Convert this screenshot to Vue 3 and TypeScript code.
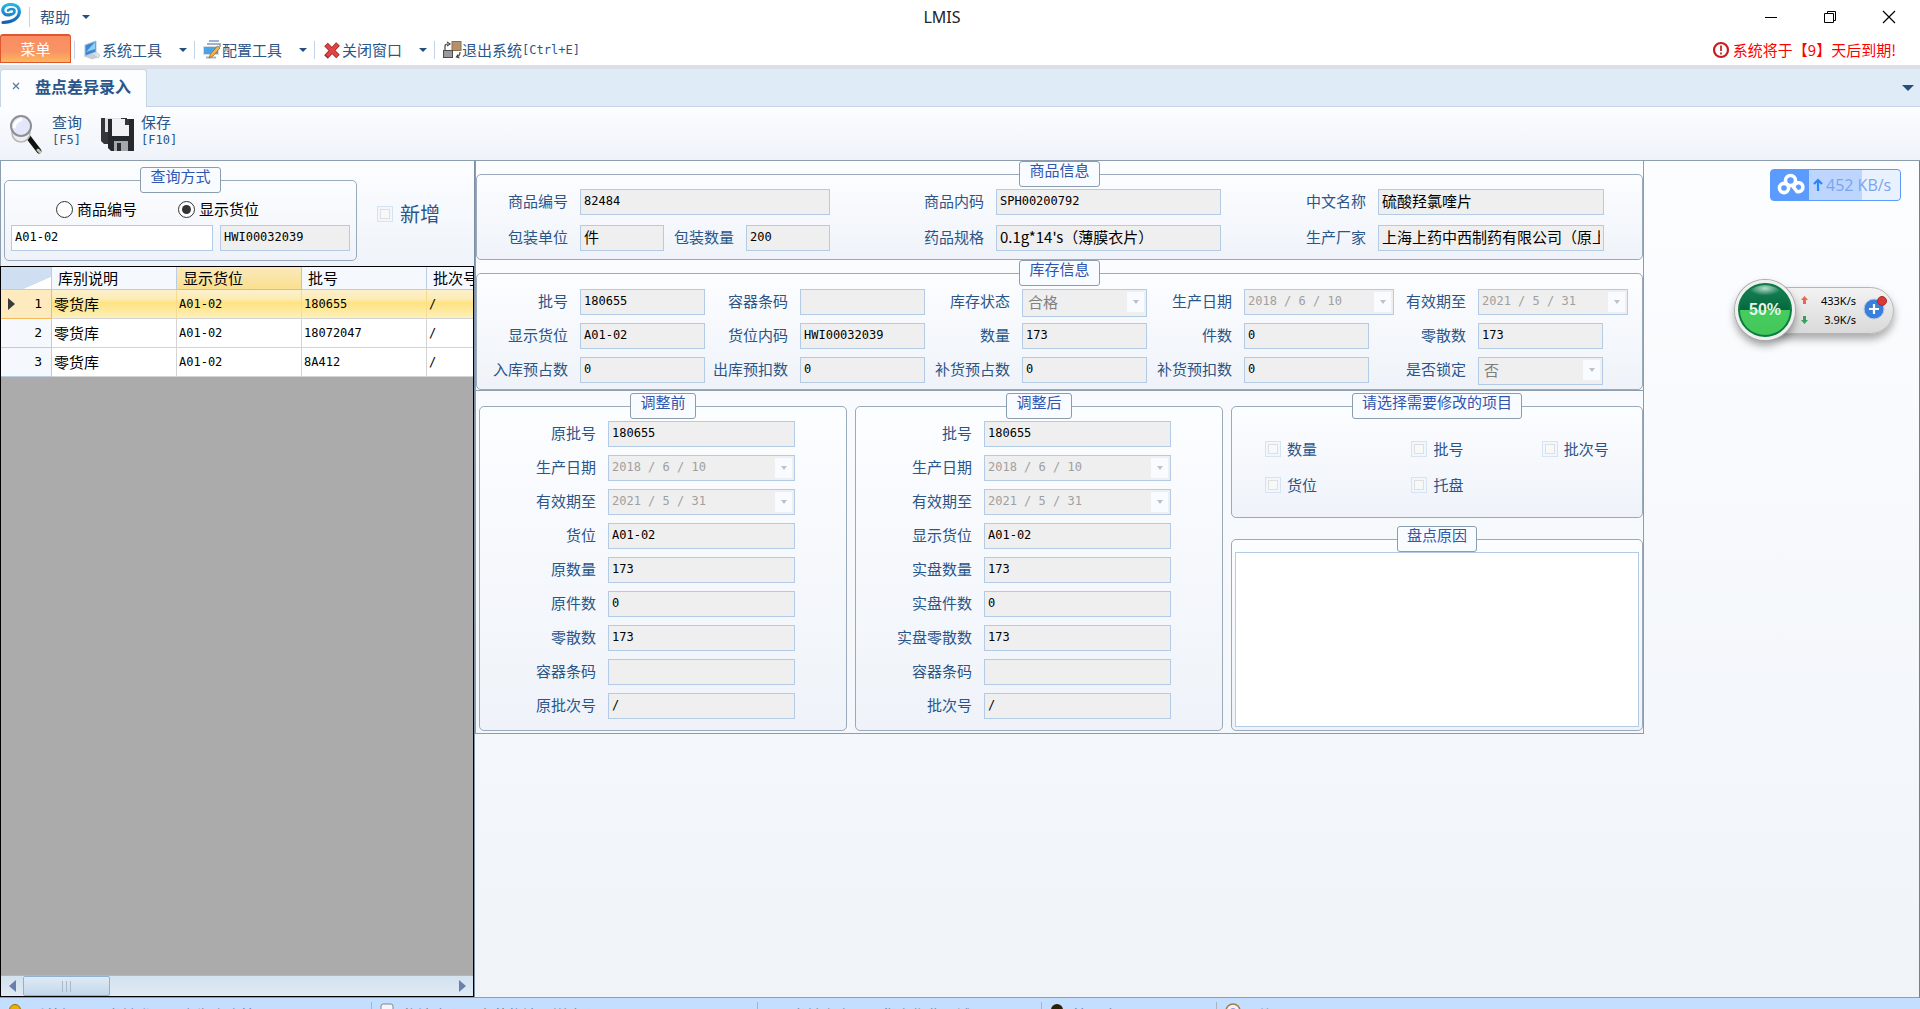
<script setup lang="ts">
import { ref } from 'vue'

interface Field {
  id: string
  label: string
  value: string
  kind?: 'text' | 'date' | 'select'
  cjk?: boolean
  wide?: boolean
}

const product: Field[] = [
  { id: 'p-code', label: '商品编号', value: '82484', wide: true },
  { id: 'p-inner', label: '商品内码', value: 'SPH00200792' },
  { id: 'p-name', label: '中文名称', value: '硫酸羟氯喹片', cjk: true },
  { id: 'p-unit', label: '包装单位', value: '件', cjk: true },
  { id: 'p-pack', label: '包装数量', value: '200' },
  { id: 'p-spec', label: '药品规格', value: "0.1g*14's（薄膜衣片）", cjk: true },
  { id: 'p-maker', label: '生产厂家', value: '上海上药中西制药有限公司（原上海中西药业）', cjk: true },
]

const stock: Field[] = [
  { id: 's-lot', label: '批号', value: '180655' },
  { id: 's-box', label: '容器条码', value: '' },
  { id: 's-state', label: '库存状态', value: '合格', kind: 'select' },
  { id: 's-made', label: '生产日期', value: '2018 / 6 / 10', kind: 'date', wide: true },
  { id: 's-exp', label: '有效期至', value: '2021 / 5 / 31', kind: 'date', wide: true },
  { id: 's-show', label: '显示货位', value: 'A01-02' },
  { id: 's-loc', label: '货位内码', value: 'HWI00032039' },
  { id: 's-qty', label: '数量', value: '173' },
  { id: 's-pcs', label: '件数', value: '0' },
  { id: 's-odd', label: '零散数', value: '173' },
  { id: 's-in', label: '入库预占数', value: '0' },
  { id: 's-out', label: '出库预扣数', value: '0' },
  { id: 's-rin', label: '补货预占数', value: '0' },
  { id: 's-rout', label: '补货预扣数', value: '0' },
  { id: 's-lock', label: '是否锁定', value: '否', kind: 'select' },
]

const adjust: { title: string; fields: Field[] }[] = [
  {
    title: '调整前',
    fields: [
      { id: 'b-lot', label: '原批号', value: '180655' },
      { id: 'b-made', label: '生产日期', value: '2018 / 6 / 10', kind: 'date' },
      { id: 'b-exp', label: '有效期至', value: '2021 / 5 / 31', kind: 'date' },
      { id: 'b-loc', label: '货位', value: 'A01-02' },
      { id: 'b-qty', label: '原数量', value: '173' },
      { id: 'b-pcs', label: '原件数', value: '0' },
      { id: 'b-odd', label: '零散数', value: '173' },
      { id: 'b-box', label: '容器条码', value: '' },
      { id: 'b-bat', label: '原批次号', value: '/' },
    ],
  },
  {
    title: '调整后',
    fields: [
      { id: 'a-lot', label: '批号', value: '180655' },
      { id: 'a-made', label: '生产日期', value: '2018 / 6 / 10', kind: 'date' },
      { id: 'a-exp', label: '有效期至', value: '2021 / 5 / 31', kind: 'date' },
      { id: 'a-loc', label: '显示货位', value: 'A01-02' },
      { id: 'a-qty', label: '实盘数量', value: '173' },
      { id: 'a-pcs', label: '实盘件数', value: '0' },
      { id: 'a-odd', label: '实盘零散数', value: '173' },
      { id: 'a-box', label: '容器条码', value: '' },
      { id: 'a-bat', label: '批次号', value: '/' },
    ],
  },
]

const items = ['数量', '批号', '批次号', '货位', '托盘']
const rows = [
  ['零货库', 'A01-02', '180655', '/'],
  ['零货库', 'A01-02', '18072047', '/'],
  ['零货库', 'A01-02', '8A412', '/'],
]
const selected = ref(0)
const mode = ref('loc')
const keyword = ref('A01-02')
const reason = ref('')
</script>

<template>
  <div class="app">
    <header class="titlebar">
      <svg class="logo" width="22" height="22" viewBox="0 0 22 22">
        <defs>
          <linearGradient id="lg" x1="0" y1="0" x2="0" y2="1">
            <stop offset="0" stop-color="#25b4e6" />
            <stop offset="1" stop-color="#1460b4" />
          </linearGradient>
        </defs>
        <path d="M10.500 11.500C6 13 2.500 10.500 2.800 7 3.200 3 7.500 1.300 11.500 1.500 17 1.800 19.800 5 19.300 9.500 18.600 15.500 12 19 3 19.500" fill="none" stroke="url(#lg)" stroke-width="3.200" stroke-linecap="round" />
        <path d="M8 7.500c2-2 6-2 6.500.3.400 2-1.800 3.700-4 3.700" fill="none" stroke="#1d8fd0" stroke-width="2.600" stroke-linecap="round" />
      </svg>
      <span class="sep tall"></span>
      <button class="menu help">帮助<i class="caret"></i></button>
      <h1>LMIS</h1>
      <div class="winctl">
        <button aria-label="最小化"><svg width="14" height="14"><path d="M1 7.500h12" stroke="#000" /></svg></button>
        <button aria-label="还原"><svg width="14" height="14" fill="none" stroke="#000"><path d="M1.500 3.500h9v9h-9zM4.500 3.500v-2h8v9h-2" /></svg></button>
        <button aria-label="关闭"><svg width="14" height="14"><path d="M1 1l12 12M13 1L1 13" stroke="#000" stroke-width="1.200" /></svg></button>
      </div>
    </header>

    <nav class="ribbon">
      <button class="main-menu">菜单</button>
      <span class="sep"></span>
      <button class="menu">
        <svg width="20" height="20" viewBox="0 0 20 20">
          <path d="M1 16l10-2 7 3-8 2.500z" fill="#c9ced6" />
          <path d="M3 5l11-4 0 11-11 4z" fill="#3f86d0" stroke="#a9c3de" />
          <path d="M4 12l9-10v7z" fill="#8fd0f5" />
          <path d="M14 12l4 3-2 3-4-3z" fill="#dfe3e8" stroke="#b9c0c9" stroke-width=".6" />
        </svg>系统工具<i class="caret far"></i>
      </button>
      <span class="sep"></span>
      <button class="menu">
        <svg width="20" height="20" viewBox="0 0 20 20">
          <path d="M7 1h10M5 4h13v3" fill="none" stroke="#7f9cbd" stroke-width="1.500" />
          <rect x="1.500" y="6.500" width="15" height="8" fill="#49a3e4" stroke="#d4dce6" />
          <path d="M4 17.500h10" stroke="#a8b2bf" stroke-width="2" />
          <path d="M7 18l1.500-4 7-8 2.500 2-7 8z" fill="#f3b548" stroke="#a3672a" stroke-width=".8" />
        </svg>配置工具<i class="caret far"></i>
      </button>
      <span class="sep"></span>
      <button class="menu">
        <svg width="20" height="20" viewBox="0 0 20 20"><path d="M4 4.500l12 12M16 4L4 17" stroke="#a52424" stroke-width="5" /><path d="M4.500 5l11 11M15.500 4.500L5 16" stroke="#e04444" stroke-width="3.400" /></svg>关闭窗口<i class="caret far"></i>
      </button>
      <span class="sep"></span>
      <button class="menu">
        <svg width="20" height="20" viewBox="0 0 20 20">
          <rect x="10" y="1.500" width="9" height="9" fill="#b5916b" stroke="#8d6e4d" />
          <rect x="1.500" y="10.500" width="9" height="7" fill="#9a9a9a" stroke="#4c4c4c" />
          <path d="M3 10V6q0-2 3-2M5 2l3 2-3 2M18 12q0 4-3 5m1-2.500L14.500 17l3 1" fill="none" stroke="#444" stroke-width="1.200" />
        </svg>退出系统<span class="mono">[Ctrl+E]</span>
      </button>
      <p class="notice">
        <svg width="18" height="18" viewBox="0 0 18 18"><circle cx="9" cy="9" r="7" fill="#fff" stroke="#c81e1e" stroke-width="2.200" /><path d="M9 4.500v5.500M9 11.500v2" stroke="#b01515" stroke-width="1.600" /></svg>
        系统将于【9】天后到期!
      </p>
    </nav>

    <div class="tabs">
      <div class="tab"><button class="tab-close" aria-label="关闭标签"><svg width="8" height="8"><path d="M1 1l6 6M7 1L1 7" stroke="#5b7ba0" stroke-width="1.300" /></svg></button>盘点差异录入</div>
      <button class="tab-list" aria-label="标签列表"><i class="caret big"></i></button>
    </div>

    <div class="toolbar">
      <button class="tool">
        <svg width="36" height="42" viewBox="0 0 36 42">
          <path d="M21 25l10 13" stroke="#111" stroke-width="5" stroke-linecap="round" />
          <path d="M30 37l2 2" stroke="#b9c9b4" stroke-width="3" stroke-linecap="round" />
          <circle cx="13" cy="20" r="9" fill="#eceef2" stroke="#b7b7ba" stroke-width="1.500" />
          <circle cx="13" cy="13" r="10" fill="#e4e6fb" stroke="#8f8f92" stroke-width="2" />
          <path d="M6 15q1-7 8-9" stroke="#fff" stroke-width="3" fill="none" />
        </svg>
        <span class="tool-text">查询<span class="mono">[F5]</span></span>
      </button>
      <button class="tool save">
        <svg width="36" height="36" viewBox="0 0 36 36">
          <path d="M1 2h26v26H4l-3-3z" fill="#33363b" />
          <rect x="5" y="2" width="16" height="14" fill="#dfe1e4" />
          <path d="M8 3h26v32H11l-3-3z" fill="#25282d" />
          <rect x="12" y="3" width="17" height="17" fill="#f1f2f4" />
          <rect x="25" y="3" width="4" height="6" fill="#33363b" />
          <rect x="14" y="25" width="14" height="10" fill="#a5a8ac" />
          <rect x="17" y="27" width="4" height="8" fill="#2a2d31" />
        </svg>
        <span class="tool-text">保存<span class="mono">[F10]</span></span>
      </button>
    </div>

    <main class="work">
      <aside class="left">
        <div class="query">
          <fieldset class="group query-box">
            <legend>查询方式</legend>
            <div class="radios">
              <label><input v-model="mode" type="radio" name="mode" value="code" />商品编号</label>
              <label><input v-model="mode" type="radio" name="mode" value="loc" />显示货位</label>
            </div>
            <div class="query-fields">
              <input v-model="keyword" class="box editable" aria-label="显示货位" />
              <input class="box" value="HWI00032039" readonly aria-label="货位内码" />
            </div>
          </fieldset>
          <label class="add"><input type="checkbox" disabled />新增</label>
        </div>
        <div class="grid-wrap">
          <table>
            <colgroup><col class="c0" /><col class="c1" /><col class="c1" /><col class="c1" /><col /></colgroup>
            <thead>
              <tr><th class="corner"></th><th>库别说明</th><th class="hot">显示货位</th><th>批号</th><th>批次号</th></tr>
            </thead>
            <tbody>
              <tr v-for="(r, i) in rows" :key="i" :class="{ on: i === selected }" @click="selected = i">
                <th scope="row"><div class="rowhead"><i :class="{ pointer: i === selected }"></i><span>{{ i + 1 }}</span></div></th>
                <td class="cn">{{ r[0] }}</td>
                <td>{{ r[1] }}</td>
                <td>{{ r[2] }}</td>
                <td>{{ r[3] }}</td>
              </tr>
            </tbody>
          </table>
          <div class="hscroll">
            <button class="arr prev" aria-label="向左滚动"></button>
            <div class="track"><div class="thumb"><i></i><i></i><i></i></div></div>
            <button class="arr next" aria-label="向右滚动"></button>
          </div>
        </div>
      </aside>

      <section class="form">
        <fieldset class="group">
          <legend>商品信息</legend>
          <div class="fields product">
            <template v-for="f in product" :key="f.id">
              <label :for="f.id">{{ f.label }}</label>
              <input :id="f.id" class="box" :class="{ cjk: f.cjk, span3: f.wide }" :value="f.value" readonly />
            </template>
          </div>
        </fieldset>

        <fieldset class="group">
          <legend>库存信息</legend>
          <div class="fields stock">
            <template v-for="f in stock" :key="f.id">
              <label :for="f.id">{{ f.label }}</label>
              <div v-if="f.kind" class="combo" :class="{ short: !f.wide }">
                <select v-if="f.kind === 'select'" :id="f.id" class="box cjk" disabled><option>{{ f.value }}</option></select>
                <input v-else :id="f.id" class="box" :value="f.value" disabled />
                <span class="drop"></span>
              </div>
              <input v-else :id="f.id" class="box short" :value="f.value" readonly />
            </template>
          </div>
        </fieldset>

        <div class="lower">
          <fieldset v-for="g in adjust" :key="g.title" class="group">
            <legend>{{ g.title }}</legend>
            <div class="fields adjust">
              <template v-for="f in g.fields" :key="f.id">
                <label :for="f.id">{{ f.label }}</label>
                <div v-if="f.kind" class="combo">
                  <input :id="f.id" class="box" :value="f.value" disabled />
                  <span class="drop"></span>
                </div>
                <input v-else :id="f.id" class="box" :value="f.value" readonly />
              </template>
            </div>
          </fieldset>
          <div class="side">
            <fieldset class="group">
              <legend>请选择需要修改的项目</legend>
              <div class="fields choose">
                <label v-for="t in items" :key="t"><input type="checkbox" disabled />{{ t }}</label>
              </div>
            </fieldset>
            <fieldset class="group reason">
              <legend>盘点原因</legend>
              <textarea v-model="reason" aria-label="盘点原因"></textarea>
            </fieldset>
          </div>
        </div>
      </section>

      <div class="speed">
        <svg width="38" height="30" viewBox="0 0 38 30" fill="none" stroke="#fff" stroke-width="3.600">
          <circle cx="19.500" cy="10.500" r="5" /><circle cx="13" cy="18" r="4.600" /><path d="M20.500 14.500l5.500 7a4.500 4.500 0 1 0-3-5" />
        </svg>
        <span class="rate"><svg width="10" height="14" viewBox="0 0 10 14"><path d="M5 13V2M1 6l4-4 4 4" fill="none" stroke="#2d85f8" stroke-width="2.200" /></svg>452 KB/s</span>
      </div>

      <div class="monitor">
        <div class="ball">50%</div>
        <div class="flow">
          <span><svg width="7" height="10" viewBox="0 0 7 10"><path d="M3.500 0L7 4H5v4H2V4H0z" fill="#ee6350" /></svg>433K/s</span>
          <span><svg width="7" height="10" viewBox="0 0 7 10"><path d="M3.500 9L7 5H5V1H2v4H0z" fill="#2fa35c" /></svg>3.9K/s</span>
        </div>
        <svg class="plus" width="24" height="26" viewBox="0 0 24 26">
          <circle cx="11" cy="15" r="10" fill="#3a7fdc" stroke="#b8cbe4" />
          <path d="M11 10v10M6 15h10" stroke="#fff" stroke-width="2.200" />
          <circle cx="19" cy="7" r="4.500" fill="#d93a36" stroke="#b32a28" />
        </svg>
      </div>
    </main>

    <footer class="status">
      <span class="s1"><svg width="14" height="14"><circle cx="7" cy="7" r="5.500" fill="#e8b100" stroke="#9a6a00" /></svg>系统提示：当前登录用户为仓库管理员</span>
      <span class="s2"><svg width="14" height="14"><rect x="1" y="1" width="12" height="12" rx="2" fill="#f4f6fa" stroke="#7f8794" /></svg>物流中心：上药物流配送中心</span>
      <span class="s3">当前仓库：零货库作业区域</span>
      <span class="s4"><svg width="14" height="14"><circle cx="7" cy="7" r="6" fill="#2b2104" /></svg>管理人员</span>
      <span class="s5"><svg width="16" height="16"><circle cx="8" cy="8" r="7" fill="#f3f0ff" stroke="#a47c3c" stroke-width="1.500" /><circle cx="8" cy="8" r="3" fill="#8f97e8" /></svg>时间</span>
    </footer>
  </div>
</template>

<style>
body {
  margin: 0;
  overflow: hidden;
}
</style>

<style scoped>
* {
  box-sizing: border-box;
}
.app {
  display: flex;
  flex-direction: column;
  height: 100vh;
  background: #fff;
  color: #2b5589;
  font: 15px/18px "Noto Sans CJK SC", sans-serif;
  overflow: hidden;
}
button,
input,
select,
textarea {
  font: inherit;
  color: inherit;
}
button {
  display: flex;
  align-items: center;
  padding: 0;
  border: 0;
  background: none;
  white-space: nowrap;
}
.mono,
td,
.box {
  font-family: "DejaVu Sans Mono", "Noto Sans CJK SC", monospace;
  font-size: 12px;
}
.caret {
  width: 0;
  border: 4px solid transparent;
  border-top: 4px solid #24507f;
  border-bottom: 0;
  margin-left: 12px;
}
.caret.far {
  margin: 0 7px 0 17px;
}
.caret.big {
  border-width: 6px 6px 0;
  margin: 0;
}
.sep {
  width: 1px;
  height: 18px;
  background: #c3d2e4;
}
.sep.tall {
  height: 20px;
  margin: 0 10px 0 7px;
}

.titlebar {
  display: flex;
  align-items: center;
  flex: none;
  height: 34px;
}
.logo {
  align-self: flex-start;
  margin-top: 3px;
}
h1 {
  flex: 1;
  margin: 0;
  padding-left: 28px;
  text-align: center;
  font: 16px/20px "Noto Sans", sans-serif;
  color: #222;
}
.help {
  width: 52px;
}
.winctl {
  display: flex;
  gap: 45px;
  padding-right: 24px;
}
.winctl button {
  height: 28px;
}

.ribbon {
  display: flex;
  align-items: center;
  flex: none;
  height: 31px;
}
.main-menu {
  align-self: flex-start;
  width: 71px;
  height: 29px;
  justify-content: center;
  border: 1px solid #e0572f;
  border-top-width: 2px;
  border-radius: 3px 3px 0 0;
  background: linear-gradient(#f98d63, #f99365 60%, #fdb95a);
  color: #fff;
  margin-right: 3px;
}
.ribbon .menu {
  margin-left: 7px;
}
.notice {
  display: flex;
  align-items: center;
  gap: 3px;
  margin: 0 24px 0 auto;
  color: #f00;
}

.tabs {
  display: flex;
  justify-content: space-between;
  flex: none;
  height: 42px;
  border-top: 4px solid #dadfe8;
  border-bottom: 1px solid #c5d5e6;
  background: #dfebf7;
}
.tab {
  display: flex;
  align-items: center;
  gap: 15px;
  width: 147px;
  height: 38px;
  padding: 0 0 6px 11px;
  border: 1px solid #c5d5e6;
  border-bottom: 0;
  border-radius: 3px 3px 0 0;
  background: #fbfdff;
  font-size: 16px;
  font-weight: bold;
  white-space: nowrap;
}
.tab-list {
  padding: 0 6px;
}

.toolbar {
  display: flex;
  align-items: flex-start;
  flex: none;
  height: 54px;
  padding: 6px 8px 0;
  border-bottom: 1px solid #8c9dae;
  background: linear-gradient(#fcfdff, #eff3f9);
}
.tool {
  gap: 8px;
  width: 92px;
}
.tool-text {
  display: flex;
  flex-direction: column;
  align-items: flex-start;
  padding-bottom: 6px;
}
.save {
  gap: 5px;
  height: 42px;
}

.work {
  position: relative;
  display: flex;
  align-items: flex-start;
  flex: 1;
  min-height: 0;
  border-right: 1px solid #6f8294;
  border-bottom: 1px solid #8c9dae;
  background: linear-gradient(#fcfdff, #f0f4f9);
}
.left {
  display: flex;
  flex-direction: column;
  flex: none;
  align-self: stretch;
  width: 475px;
  border-right: 1px solid #7d90a3;
}
.query {
  display: flex;
  align-items: flex-start;
  gap: 20px;
  height: 105px;
  padding: 6px 0 0 3px;
  border-left: 1px solid #8c9dae;
  background: linear-gradient(#fcfdff, #eff4fa);
}
.group {
  min-width: 0;
  margin: 0;
  padding: 0;
  border: 1px solid #9aaaba;
  border-radius: 5px;
  background: linear-gradient(#fcfdff, #eff3f9);
}
legend {
  height: 26px;
  margin: 0 auto;
  padding: 0 9px;
  border: 1px solid #8c9dae;
  border-radius: 3px;
  background: #f8fbff;
  color: #2f55b0;
  line-height: 16px;
  white-space: nowrap;
}
.query-box {
  display: grid;
  width: 353px;
  padding: 7px 6px 9px;
  row-gap: 7px;
}
.radios {
  display: flex;
  gap: 41px;
  padding-left: 45px;
  color: #000;
}
.radios label {
  display: flex;
  align-items: center;
  gap: 4px;
}
.radios input {
  appearance: none;
  display: grid;
  place-items: center;
  width: 17px;
  height: 17px;
  margin: 0;
  border: 1px solid #333;
  border-radius: 50%;
  background: #fff;
}
.radios input:checked::after {
  content: "";
  width: 9px;
  height: 9px;
  border-radius: 50%;
  background: #333;
}
.query-fields {
  display: grid;
  grid-template-columns: 202fr 130fr;
  gap: 7px;
}
.box {
  display: block;
  width: 100%;
  min-width: 0;
  height: 26px;
  margin: 0;
  padding: 0 3px 3px;
  border: 1px solid #b4cbe5;
  border-radius: 0;
  background: #efefef;
  color: #000;
  outline: none;
}
.box.cjk {
  font-family: "Noto Sans CJK SC", sans-serif;
  font-size: 15px;
}
.box.editable {
  background: #fff;
}
.box:disabled {
  color: #a0a0a0;
  opacity: 1;
}
select.box {
  appearance: none;
  height: 28px;
  padding: 0 5px 3px;
}
select.box:disabled {
  color: #808080;
}
input[type="checkbox"] {
  appearance: none;
  flex: none;
  width: 16px;
  height: 16px;
  margin: 0;
  border: 1px solid #d6e4f2;
  background: #f8f8f8;
  box-shadow: inset 0 0 0 2px #f1f7fd, inset 0 0 0 3px #dfdfe2;
}
.add {
  display: flex;
  align-items: center;
  gap: 7px;
  padding-top: 34px;
  font-size: 20px;
  line-height: 26px;
}

.grid-wrap {
  display: flex;
  flex-direction: column;
  flex: 1;
  border: 1px solid #000;
  background: #ababab;
  overflow: hidden;
}
table {
  width: 100%;
  table-layout: fixed;
  border-collapse: separate;
  border-spacing: 0;
  color: #000;
}
.c0 {
  width: 51px;
}
.c1 {
  width: 125px;
}
th,
td {
  height: 29px;
  padding: 0 2px;
  border-right: 1px solid #d4d4d4;
  border-bottom: 1px solid #d4d4d4;
  background: #fff;
  text-align: left;
  font-weight: normal;
  white-space: nowrap;
  overflow: hidden;
}
th:last-child,
td:last-child {
  border-right: 0;
}
td.cn {
  font-family: "Noto Sans CJK SC", sans-serif;
  font-size: 15px;
}
thead th {
  height: 23px;
  padding: 0 6px;
  border-color: #b9cde4;
  background: #f5f9fe;
  line-height: 20px;
}
thead .corner {
  background: linear-gradient(to bottom right, #cfdff1 72%, #fff 73%);
}
thead .hot {
  border-color: #f3b95a;
  background: linear-gradient(#fbe8bd, #fae08e);
}
tbody th {
  border-color: #b9cde4;
  background: #f5f9fe;
  font: 13px/18px "DejaVu Sans Mono", monospace;
}
.rowhead {
  display: flex;
  align-items: center;
  justify-content: space-between;
  padding: 0 7px 0 5px;
}
.pointer {
  border: 6px solid transparent;
  border-left: 7px solid #3a3a3a;
  border-right: 0;
}
.on th {
  border-color: #f3b95a;
  background: #fdebbf;
}
.on td {
  border-right-color: #f6dc90;
  background: linear-gradient(#fcf0cd, #fdecb8 30%, #ffe384 45%, #fee795 65%, #fcf0bd);
}
.hscroll {
  display: flex;
  align-items: center;
  height: 21px;
  margin-top: auto;
  border-top: 1px solid #9dbbd6;
  background: linear-gradient(#d3e2ef, #dfeaf4);
}
.arr {
  width: 22px;
  height: 20px;
  justify-content: center;
}
.arr::before {
  content: "";
  border: 6px solid transparent;
}
.arr.prev::before {
  border-left: 0;
  border-right: 7px solid #6a7fae;
}
.arr.next::before {
  border-right: 0;
  border-left: 7px solid #6a7fae;
}
.track {
  flex: 1;
}
.thumb {
  display: flex;
  align-items: center;
  justify-content: center;
  gap: 3px;
  width: 87px;
  height: 20px;
  border: 1px solid #8fb2d0;
  border-radius: 2px;
  background: linear-gradient(#dfeaf5, #c3d8eb);
}
.thumb i {
  width: 1px;
  height: 11px;
  background: #a9b9c8;
}

.form {
  flex: 0 1 1169px;
  min-width: 0;
  border: 1px solid #8c9dae;
  border-top: 0;
}
.fields {
  display: grid;
}
.fields label {
  display: flex;
  align-items: center;
  justify-content: flex-end;
  justify-self: end;
  min-width: 0;
  height: 24px;
  white-space: nowrap;
}
.product {
  grid-template-columns: 91fr 84fr 58fr 84fr 142fr 225fr 133fr 226fr;
  grid-auto-rows: 26px;
  gap: 10px 12px;
  padding: 2px 38px 8px 0;
}
.span3 {
  grid-column: span 3;
}
.stock {
  grid-template-columns: 91fr 125fr 71fr 125fr 73fr 125fr 73fr 150fr 60fr 150fr;
  grid-auto-rows: 26px;
  gap: 8px 12px;
  padding: 3px 14px 6px 0;
}
.short {
  max-width: 125px;
}
.combo {
  position: relative;
  min-width: 0;
}
.drop {
  position: absolute;
  top: 3px;
  right: 3px;
  display: grid;
  place-items: center;
  width: 17px;
  height: 20px;
  background: #f8fbff;
  pointer-events: none;
}
.drop::after {
  content: "";
  border: 3px solid transparent;
  border-top: 4px solid #c0c0c0;
  border-bottom: 0;
}
.lower {
  display: grid;
  grid-template-columns: 368fr 368fr 412fr;
  gap: 8px;
  padding: 2px 0 2px 3px;
  border-top: 1px solid #8c9dae;
}
.adjust {
  grid-template-columns: 116fr 187fr;
  grid-auto-rows: 26px;
  gap: 8px 12px;
  padding: 2px 51px 10px 0;
}
.side {
  display: flex;
  flex-direction: column;
  gap: 8px;
  min-width: 0;
}
.choose {
  grid-template-columns: 146fr 130fr 100fr;
  row-gap: 12px;
  padding: 18px 0 20px 33px;
}
.choose label {
  justify-self: start;
  justify-content: flex-start;
  gap: 6px;
}
.reason {
  flex: 1;
  padding: 0 3px 3px;
}
textarea {
  display: block;
  width: 100%;
  height: 175px;
  margin: 0;
  border: 1px solid #b4cbe5;
  background: #fff;
  resize: none;
  outline: none;
}

.speed {
  position: absolute;
  top: 8px;
  right: 18px;
  display: flex;
  width: 131px;
  height: 32px;
  border: 1px solid #5a9bfb;
  border-radius: 4px;
  background: #5b9bfd;
  overflow: hidden;
}
.rate {
  display: flex;
  align-items: center;
  gap: 3px;
  flex: 1;
  padding-left: 4px;
  background: linear-gradient(90deg, #bcd6ff 58%, #e9f1fe 58%);
  color: #7ba4ee;
  font: 16px/30px "Open Sans", sans-serif;
  white-space: nowrap;
}
.monitor {
  position: absolute;
  top: 119px;
  right: 25px;
  display: flex;
  align-items: center;
  width: 159px;
  height: 60px;
}
.monitor::before {
  content: "";
  position: absolute;
  inset: 7px 0 6px 30px;
  border: 1px solid #b5b5b5;
  border-radius: 24px;
  background: linear-gradient(#f3f3f3, #d9d9d9);
  box-shadow: 0 5px 9px #0005;
}
.ball {
  position: relative;
  flex: none;
  width: 60px;
  height: 60px;
  border: 3px solid #f0f0f0;
  border-radius: 50%;
  background: radial-gradient(ellipse 16px 7px at 50% 10%, #b6dccb, transparent), linear-gradient(#1b8558, #04683f 50%, #46cc5e 50%, #43c659);
  box-shadow: 0 0 0 1px #aaa, inset 0 0 0 2px #0c7a45, 0 5px 9px #0006;
  color: #e6f7ea;
  font: bold 16px/54px "Liberation Sans", sans-serif;
  text-align: center;
}
.flow {
  position: relative;
  display: flex;
  flex-direction: column;
  gap: 1px;
  width: 61px;
  padding-left: 6px;
  color: #000;
  font: 11px/18px "Noto Sans", sans-serif;
}
.flow span {
  display: flex;
  align-items: center;
  justify-content: space-between;
}
.plus {
  position: relative;
  margin: 0 0 6px 7px;
}

.status {
  display: flex;
  flex: none;
  height: 11px;
  padding-top: 4px;
  background: #c4deff;
  color: #66758c;
  line-height: 26px;
  overflow: hidden;
}
.status span {
  display: flex;
  align-items: flex-start;
  gap: 9px;
  height: 26px;
  padding-left: 8px;
  border-right: 1px solid #a9b2bd;
  white-space: nowrap;
  overflow: hidden;
}
.status svg {
  flex: none;
  margin-top: 1px;
}
.s1 {
  flex: 0 1 372px;
}
.s2 {
  flex: 0 1 386px;
}
.s3 {
  flex: 0 1 284px;
}
.status .s3 {
  padding-left: 33px;
}
.s4 {
  flex: 0 1 175px;
}
.status .s5 {
  border: 0;
}
</style>
